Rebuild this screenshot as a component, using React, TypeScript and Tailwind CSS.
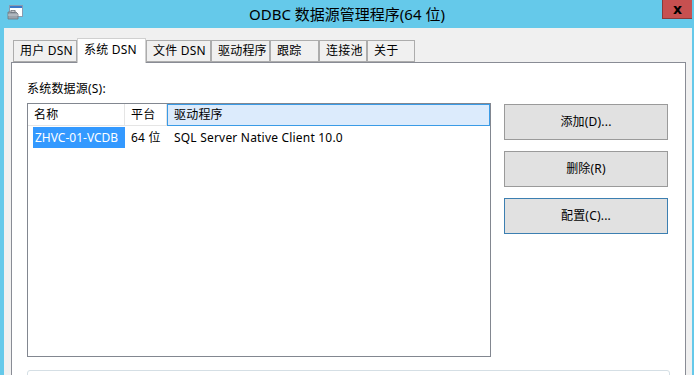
import React from "react";

const tabs = [
  { label: "用户 DSN", w: "w-[64px]" },
  { label: "系统 DSN", w: "w-[69px]", active: true },
  { label: "文件 DSN", w: "w-[65px]" },
  { label: "驱动程序", w: "w-[59px]" },
  { label: "跟踪", w: "w-[49px]" },
  { label: "连接池", w: "w-[48px]" },
  { label: "关于", w: "w-[48px]" },
];

const WindowIcon = () => (
  <svg width="16" height="15" viewBox="0 0 16 15">
    <rect x="2.5" y="0.5" width="13" height="11" fill="#fff" stroke="#8a9bb0" />
    <rect x="3" y="1" width="12" height="2" fill="#3b78c8" />
    <path d="M1 7 L9 7 L11 9 L11 14 L1 14 Z" fill="#9aa3ab" stroke="#6e767e" strokeWidth="0.8" />
    <rect x="4" y="5.5" width="4" height="2" fill="none" stroke="#6e767e" strokeWidth="0.8" />
    <rect x="1" y="9.5" width="10" height="1" fill="#c5ccd2" />
  </svg>
);

const Button = ({ label, focused }: { label: string; focused?: boolean }) => (
  <div
    className={`h-[36px] w-[164px] flex items-center justify-center bg-[#e1e1e1] border text-[12px] text-black ${
      focused ? "border-[#3c7fb1]" : "border-[#9a9a9a]"
    }`}
  >
    {label}
  </div>
);

export default function App() {
  return (
    <div
      className="w-[694px] h-[375px] overflow-hidden bg-[#65c9ea] flex flex-col text-black"
      style={{ fontFamily: '"Noto Sans", "Noto Sans CJK SC", sans-serif' }}
    >
      {/* title bar */}
      <div className="h-[28px] shrink-0 grid grid-cols-[1fr_auto_1fr]">
        <div className="pl-[7px] pt-[5px]">
          <WindowIcon />
        </div>
        <div className="text-[15px] leading-[28px] text-black">ODBC 数据源管理程序(64 位)</div>
        <div className="flex justify-end pr-[2px]">
          <div className="w-[30px] h-[19px] bg-[#c75050] border-l border-b border-[#8a3a3a] flex items-center justify-center">
            <span className="text-[14px] font-bold leading-none" style={{ fontFamily: '"DejaVu Sans", sans-serif' }}>
              x
            </span>
          </div>
        </div>
      </div>

      {/* window body */}
      <div className="flex-1 ml-[4px] mr-[2px] bg-[#f0f0f0] pt-[9px] flex flex-col">
        <div className="flex items-end pl-[9px] h-[25px] relative z-10">
          {tabs.map((t) =>
            t.active ? (
              <div
                key={t.label}
                className={`${t.w} h-[25px] -mb-px bg-white border border-b-0 border-[#d0d0d0] pl-[6px] text-[12px] leading-[22px] tracking-[0.2px]`}
              >
                {t.label}
              </div>
            ) : (
              <div
                key={t.label}
                className={`${t.w} h-[22px] bg-[#f0f0f0] border border-[#acacac] pl-[6px] text-[12px] leading-[20px] tracking-[0.2px]`}
              >
                {t.label}
              </div>
            )
          )}
        </div>

        <div className="flex-1 ml-[7px] w-[675px] bg-white border border-[#898c95] border-b-0 pl-[15px] pt-[18px] tracking-[0.2px]">
          <div className="text-[12px] leading-[16px]">系统数据源(S):</div>
          <div className="flex mt-[6px]">
            {/* list */}
            <div className="w-[464px] h-[254px] border border-[#828790] bg-white">
              <div className="flex h-[22px] text-[12px]">
                <div className="w-[97px] pl-[6px] leading-[21px] border-r border-b border-[#e5e5e5]">名称</div>
                <div className="w-[42px] pl-[6px] leading-[21px] border-r border-b border-[#e5e5e5]">平台</div>
                <div className="flex-1 pl-[6px] leading-[20px] bg-[#dcebfc] border border-[#3a9be6]">驱动程序</div>
              </div>
              <div className="flex h-[21px] text-[12px] leading-[21px] mt-px">
                <div className="ml-[5px] w-[92px] bg-[#3399ff] text-white pl-[2px] tracking-normal">ZHVC-01-VCDB</div>
                <div className="w-[42px] pl-[6px]">64 位</div>
                <div className="pl-[7px]">SQL Server Native Client 10.0</div>
              </div>
            </div>
            {/* buttons */}
            <div className="ml-[13px] mt-px flex flex-col gap-[11px]">
              <Button label="添加(D)..." />
              <Button label="删除(R)" />
              <Button label="配置(C)..." focused />
            </div>
          </div>
          <div className="mt-[13px] w-[643px] h-[20px] border border-[#d5dfe5] rounded-[3px]" />
        </div>
      </div>
    </div>
  );
}
